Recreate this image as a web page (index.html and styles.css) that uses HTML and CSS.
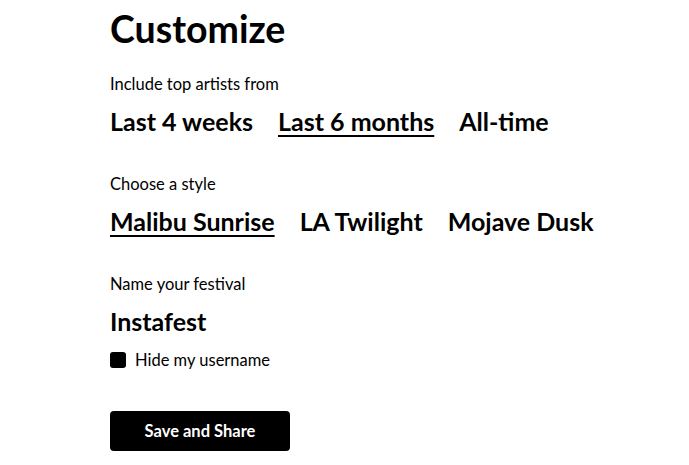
FILE: index.html
```html
<!DOCTYPE html>
<html lang="en">
<head>
  <meta charset="UTF-8">
  <title>Customize</title>
  <link rel="stylesheet" href="styles.css">
</head>
<body>

<div class="panel">
  <h1>Customize</h1>

  <div class="section">
    <p class="label">Include top artists from</p>
    <div class="options">
      <span class="option">Last 4 weeks</span>
      <span class="option selected">Last 6 months</span>
      <span class="option">All-time</span>
    </div>
  </div>

  <div class="section">
    <p class="label">Choose a style</p>
    <div class="options">
      <span class="option selected">Malibu Sunrise</span>
      <span class="option">LA Twilight</span>
      <span class="option">Mojave Dusk</span>
    </div>
  </div>

  <div class="section last">
    <p class="label">Name your festival</p>
    <div class="festival-name">Instafest</div>
    <label class="check-row">
      <span class="box"></span>
      Hide my username
    </label>
  </div>

  <button class="share-btn">Save and Share</button>
</div>

</body>
</html>
```

FILE: styles.css
```css
* { box-sizing: border-box; margin: 0; padding: 0; }
body {
  font-family: Lato, "Open Sans", sans-serif;
  background: #fff;
  color: #000;
}
.panel {
  padding: 7px 0 0 110px;
}
h1 {
  font-size: 37.5px;
  font-weight: 700;
  line-height: 44px;
  margin-bottom: 23px;
}
.section {
  margin-bottom: 38px;
}
.section.last {
  margin-bottom: 43px;
}
.label {
  font-size: 16.5px;
  line-height: 20px;
  margin-bottom: 12px;
}
.options {
  display: flex;
  gap: 25px;
}
.option {
  font-size: 25px;
  font-weight: 700;
  line-height: 30px;
  cursor: pointer;
}
.option.selected {
  text-decoration: underline;
  text-underline-offset: 4px;
  text-decoration-thickness: 2px;
}
.festival-name {
  font-size: 25px;
  font-weight: 700;
  line-height: 30px;
  margin-bottom: 16px;
}
.check-row {
  display: flex;
  align-items: center;
  gap: 9px;
  height: 16px;
  font-size: 16.5px;
}
.box {
  width: 16px;
  height: 16px;
  background: #000;
  border-radius: 3px;
}
.share-btn {
  display: block;
  width: 180px;
  height: 40px;
  background: #000;
  color: #fff;
  border: none;
  border-radius: 4px;
  font-family: inherit;
  font-size: 16.5px;
  font-weight: 700;
  cursor: pointer;
}
```
